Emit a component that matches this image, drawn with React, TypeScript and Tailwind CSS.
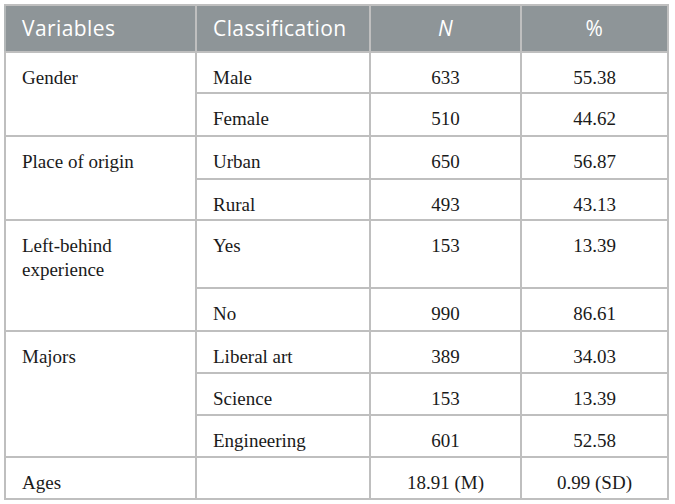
const rows: { v?: string; span?: number; c: string; n: string; p: string; h: string }[] = [
  { v: 'Gender', span: 2, c: 'Male', n: '633', p: '55.38', h: 'h-[41px]' },
  { c: 'Female', n: '510', p: '44.62', h: 'h-[43px]' },
  { v: 'Place of origin', span: 2, c: 'Urban', n: '650', p: '56.87', h: 'h-[43px]' },
  { c: 'Rural', n: '493', p: '43.13', h: 'h-[41px]' },
  { v: 'Left-behind experience', span: 2, c: 'Yes', n: '153', p: '13.39', h: 'h-[68px]' },
  { c: 'No', n: '990', p: '86.61', h: 'h-[43px]' },
  { v: 'Majors', span: 3, c: 'Liberal art', n: '389', p: '34.03', h: 'h-[42px]' },
  { c: 'Science', n: '153', p: '13.39', h: 'h-[42px]' },
  { c: 'Engineering', n: '601', p: '52.58', h: 'h-[42px]' },
  { v: 'Ages', span: 1, c: '', n: '18.91 (M)', p: '0.99 (SD)', h: 'h-[42px]' },
];

export default function App() {
  const cell = 'border-2 border-solid border-[#bfbfbf] align-top pt-[13px] pb-0 leading-[24px]';
  const head = 'border-2 border-solid border-[#bfbfbf] border-l-[#b4b8b9] font-normal p-0';
  return (
    <div className="w-[675px] h-[504px] bg-white pt-[4px] pl-[4px]">
      <table
        className="table-fixed border-collapse w-[663px] text-[19px] text-[#1a1a1a]"
        style={{ fontFamily: '"Liberation Serif", serif' }}
      >
        <colgroup>
          <col className="w-[191px]" />
          <col className="w-[174px]" />
          <col className="w-[151px]" />
          <col className="w-[147px]" />
        </colgroup>
        <thead>
          <tr
            className="h-[47px] bg-[#8e9598] text-white text-[21px] tracking-[0.4px]"
            style={{ fontFamily: '"Open Sans", sans-serif' }}
          >
            <th className={`${head} text-left pl-[16px]`}>Variables</th>
            <th className={`${head} text-left pl-[16px]`}>Classification</th>
            <th className={`${head} text-center italic`}>N</th>
            <th className={`${head} text-center`}>%</th>
          </tr>
        </thead>
        <tbody>
          {rows.map((r, i) => (
            <tr key={i} className={r.h}>
              {r.v !== undefined && (
                <td rowSpan={r.span} className={`${cell} pl-[16px] pr-[20px]`}>
                  {r.v}
                </td>
              )}
              <td className={`${cell} pl-[16px]`}>{r.c}</td>
              <td className={`${cell} text-center`}>{r.n}</td>
              <td className={`${cell} text-center`}>{r.p}</td>
            </tr>
          ))}
        </tbody>
      </table>
    </div>
  );
}
